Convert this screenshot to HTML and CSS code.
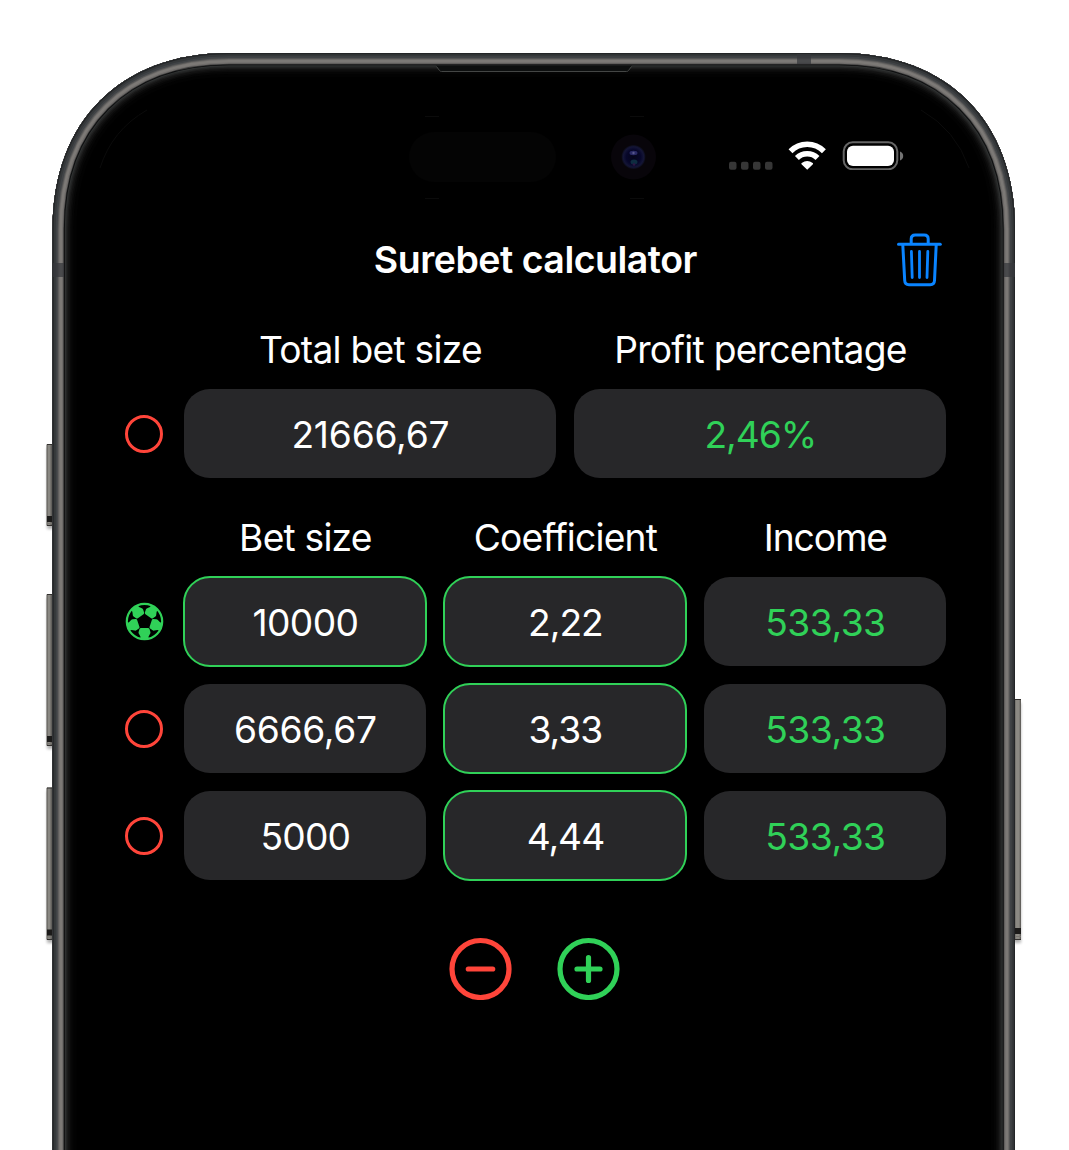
FILE: index.html
```html
<!DOCTYPE html>
<html lang="en">
<head>
<meta charset="utf-8">
<title>Surebet calculator</title>
<link rel="stylesheet" href="styles.css">
</head>
<body>
<svg class="phone" width="1069" height="1150" viewBox="0 0 1069 1150" aria-hidden="true">
  <defs>
    <path id="body" d="M52.500 1300V229C52.500 121 121 53 229 53H839C947 53 1015 121 1015 229V1300Z"/>
    <clipPath id="inside"><use href="#body"/></clipPath>
    <linearGradient id="keyL" x1="0" x2="1" y1="0" y2="0"><stop offset="0" stop-color="#55534f"/><stop offset=".3" stop-color="#95938d"/><stop offset=".55" stop-color="#6d6b67"/><stop offset="1" stop-color="#2b2a28"/></linearGradient>
    <linearGradient id="keyR" x1="1" x2="0" y1="0" y2="0"><stop offset="0" stop-color="#55534f"/><stop offset=".25" stop-color="#8b8983"/><stop offset=".6" stop-color="#8b8983"/><stop offset="1" stop-color="#33312f"/></linearGradient>
    <filter id="soft" x="-100%" width="300%" y="-10%" height="120%"><feGaussianBlur stdDeviation="1.8"/></filter>
    <radialGradient id="lens"><stop offset="0" stop-color="#050519"/><stop offset=".6" stop-color="#07072a"/><stop offset=".85" stop-color="#141536"/><stop offset="1" stop-color="#0b0b16"/></radialGradient>
  </defs>
  <g filter="url(#soft)" fill="#000" opacity=".3">
    <rect x="47" y="448" width="8" height="81"/><rect x="47" y="598" width="8" height="151"/><rect x="47" y="791" width="8" height="152"/><rect x="1013" y="703" width="8" height="240"/>
  </g>
  <g fill="url(#keyL)">
    <rect x="46.500" y="444" width="8" height="82" rx="1"/><rect x="46.500" y="594" width="8" height="152" rx="1"/><rect x="46.500" y="787.500" width="8" height="152.500" rx="1"/>
  </g>
  <rect x="1013" y="699" width="8" height="241" rx="1" fill="url(#keyR)"/>
  <path d="M47 519h6M47 739h6M47 932.500h6M1015 931h6" stroke="#1b1a19" stroke-width="6"/>
  <path d="M47 523.500h6M47 743.500h6M47 937h6M1015 936.500h6" stroke="#77746f" stroke-width="1.200"/>
  <path d="M47 525.500h6M47 745.500h6M47 939.500h6M1015 939.500h6M47 444.500h6M47 594.500h6M47 788h6M1015 699.500h6" stroke="#33312f"/>
  <use href="#body" fill="#000"/>
  <g clip-path="url(#inside)" fill="none">
    <use href="#body" stroke="#020202" stroke-width="48"/>
    <use href="#body" stroke="#050505" stroke-width="42"/>
    <use href="#body" stroke="#0a0a0a" stroke-width="38"/>
    <use href="#body" stroke="#111" stroke-width="35"/>
    <use href="#body" stroke="#191919" stroke-width="32"/>
    <use href="#body" stroke="#232424" stroke-width="29.500"/>
    <use href="#body" stroke="#2d2f2f" stroke-width="27"/>
    <use href="#body" stroke="#0c0d0e" stroke-width="24.500"/>
    <use href="#body" stroke="#3b3b3b" stroke-width="22.800"/>
    <use href="#body" stroke="#6f6c6a" stroke-width="21.500"/>
    <use href="#body" stroke="#7c7976" stroke-width="19"/>
    <use href="#body" stroke="#6c6a68" stroke-width="14"/>
    <use href="#body" stroke="#545454" stroke-width="12"/>
    <use href="#body" stroke="#404346" stroke-width="10"/>
    <use href="#body" stroke="#35383a" stroke-width="6.500"/>
    <use href="#body" stroke="#232527" stroke-width="2.400"/>
  </g>
  <path d="M53 263h11v14H53zM1004 263h11v14h-11zM797 54h14v10h-14z" fill="#36383b" opacity=".72"/>
  <path d="M436 65.500h196l-3.500 5q-.6 1.300-2 1.300H442q-1.400 0-2-1.300z" fill="#0d0f0f"/>
  <path d="M436.500 66.500l3 4q.7 1 2 1h185q1.300 0 2-1l3-4" fill="none" stroke="#444645"/>
  <rect x="409" y="132" width="147" height="50" rx="25" fill="#040404"/>
  <circle cx="633.500" cy="157" r="22.500" fill="#08050a"/>
  <circle cx="633.500" cy="157" r="12" fill="url(#lens)"/>
  <ellipse cx="633.500" cy="153" rx="4" ry="2.200" fill="#2a2a66"/>
  <circle cx="633.500" cy="153" r="1.200" fill="#58588c"/>
  <ellipse cx="634" cy="162" rx="3.500" ry="2.500" fill="#0e2c40"/>
  <circle cx="634" cy="164.500" r="1.300" fill="#2e1542"/>
  <path d="M100 168Q112 130 147 110M921 110Q956 130 969 168" fill="none" stroke="#0b0b0b"/>
  <path d="M425 116.500h14M630 116.500h14M425 198.500h14M630 198.500h14" stroke="#0b0b0b"/>
</svg>

<main class="screen">
  <div class="status">
    <svg width="175" height="30" viewBox="0 0 175 30" role="img" aria-label="Status">
      <g fill="#363636"><rect x="0" y="21.800" width="7.500" height="8" rx="2"/><rect x="12" y="21.800" width="7.500" height="8" rx="2"/><rect x="24" y="21.800" width="7.500" height="8" rx="2"/><rect x="36" y="21.800" width="7.500" height="8" rx="2"/></g>
      <g fill="none" stroke="#fff" stroke-width="5.500">
        <path d="M61.500 11.300A23.500 23.500 0 0 1 94.900 11.300"/>
        <path d="M67.900 18A14.500 14.500 0 0 1 88.500 18"/>
      </g>
      <path d="M78.200 29.800L72.500 24.200Q72 23.500 72.700 23Q78.200 18.800 83.700 23Q84.400 23.500 83.900 24.200Z" fill="#fff"/>
      <rect x="114.700" y="2.300" width="53.600" height="27" rx="9" fill="none" stroke="#666" stroke-width="2"/>
      <rect x="118" y="5.700" width="47" height="20.300" rx="6" fill="#fff"/>
      <path d="M171 11.500q3.200 1.300 3.200 4.500t-3.200 4.500z" fill="#737373"/>
    </svg>
  </div>

  <header class="bar">
    <h1 class="title">Surebet calculator</h1>
    <button class="icon-button" aria-label="Clear">
      <svg width="46" height="54" viewBox="0 0 46 54" fill="none" stroke="#0a84ff" stroke-width="3" stroke-linecap="round" stroke-linejoin="round">
        <path d="M1.500 11.200H43.300"/>
        <path d="M14.200 10V6Q14.200 2 18.200 2H27.200Q31.200 2 31.200 6V10"/>
        <path d="M5.800 12L7.700 47.500Q7.900 51.700 12 51.700H33.200Q37.300 51.700 37.500 47.500L39.200 12"/>
        <path stroke-width="2.800" d="M14.400 18.500L15.200 44.500M22.500 18.500V44.500M30.800 18.500L30 44.500"/>
      </svg>
    </button>
  </header>

  <section class="grid totals">
    <span></span>
    <span class="label l-total">Total bet size</span>
    <span class="label l-profit">Profit percentage</span>
    <i class="ring"></i>
    <span class="field v-total">21666,67</span>
    <span class="field green v-percent">2,46%</span>
  </section>

  <section class="grid bets">
    <span></span>
    <span class="label l-bet">Bet size</span>
    <span class="label l-coef">Coefficient</span>
    <span class="label l-income">Income</span>

    <svg class="ball" width="39" height="39" viewBox="0 0 39 39">
      <defs><clipPath id="ballClip"><circle cx="19.500" cy="19.500" r="18"/></clipPath>
      <path id="patch" d="M16 26h7q1 0 1.500 1l.9 3q.3 1-.3 1.700L23.600 34.500V38H15.400V34.500L13.900 31.700q-.6-.7-.3-1.700l.9-3q.5-1 1.500-1z"/></defs>
      <circle cx="19.500" cy="19.500" r="17.700" fill="none" stroke="#30d158" stroke-width="2.200"/>
      <g fill="#30d158" clip-path="url(#ballClip)">
        <use href="#patch"/><use href="#patch" transform="rotate(72 19.500 19.500)"/><use href="#patch" transform="rotate(144 19.500 19.500)"/><use href="#patch" transform="rotate(216 19.500 19.500)"/><use href="#patch" transform="rotate(288 19.500 19.500)"/>
      </g>
    </svg>
    <span class="field active v-10000">10000</span>
    <span class="field active v-coef">2,22</span>
    <span class="field green v-income">533,33</span>

    <i class="ring"></i>
    <span class="field v-6666">6666,67</span>
    <span class="field active v-coef">3,33</span>
    <span class="field green v-income">533,33</span>

    <i class="ring"></i>
    <span class="field v-5000">5000</span>
    <span class="field active v-coef">4,44</span>
    <span class="field green v-income">533,33</span>
  </section>

  <footer class="actions">
    <button class="icon-button" aria-label="Remove"><svg width="63" height="63" viewBox="0 0 63 63" fill="none" stroke="#ff453a" stroke-width="5.200" stroke-linecap="round"><circle cx="31.500" cy="32" r="28.500"/><path d="M19.300 32H43.700"/></svg></button>
    <button class="icon-button" aria-label="Add"><svg width="63" height="63" viewBox="0 0 63 63" fill="none" stroke="#30d158" stroke-width="5.200" stroke-linecap="round"><circle cx="31.500" cy="32" r="28.500"/><path d="M20 32H43M31.500 20.500V43.500"/></svg></button>
  </footer>
</main>
</body>
</html>
```
FILE: styles.css
```css
* { box-sizing: border-box; }

body {
  margin: 0;
  width: 1069px;
  height: 1150px;
  overflow: hidden;
  position: relative;
  background: #fff;
  color: #fff;
  font-family: Inter, "Liberation Sans", sans-serif;
  font-size: 37.2px;
}

.phone { position: absolute; inset: 0; }

.screen {
  position: relative;
  width: 1069px;
  padding: 140px 122.600px 0 125.400px;
}

.status {
  display: flex;
  justify-content: flex-end;
  height: 30px;
  padding-right: 42.400px;
}

.bar {
  display: grid;
  grid-template-columns: 46px 1fr 46px;
  align-items: center;
  height: 54px;
  margin: 62px 3px 0 2px;
}

.title {
  grid-column: 2;
  margin: 0;
  text-align: center;
  font-size: 37.500px;
  font-weight: 600;
  letter-spacing: -.5px;
  line-height: 55px;
  white-space: nowrap;
}

.icon-button {
  display: block;
  padding: 0;
  border: 0;
  background: none;
}

.icon-button svg { display: block; }

.grid {
  display: grid;
  justify-items: stretch;
  align-items: center;
  column-gap: 18px;
  row-gap: 18px;
}

.totals {
  grid-template-columns: 41px 1fr 1fr;
  grid-template-rows: 46px 89px;
  row-gap: 16px;
  margin-top: 41.400px;
}

.bets {
  grid-template-columns: 41px repeat(3, 1fr);
  grid-template-rows: 46px repeat(3, 89px);
  margin-top: 35px;
}

.label, .field {
  text-align: center;
  white-space: nowrap;
}

.label { line-height: 46px; }

.bets .label { padding-top: 3px; }

.l-total { letter-spacing: -.75px; }
.l-profit { letter-spacing: -.75px; }
.l-bet { letter-spacing: -.8px; }
.l-coef { letter-spacing: -.8px; font-variant-ligatures: none; }
.l-income { letter-spacing: -1.100px; }

.field {
  height: 89px;
  line-height: 91px;
  border-radius: 26px;
  background: #272729;
}

.v-total { letter-spacing: -.2px; }
.v-percent { letter-spacing: -1px; }
.v-10000 { letter-spacing: -.6px; }
.v-coef { letter-spacing: -1px; }
.v-income { letter-spacing: -.5px; }
.v-6666 { letter-spacing: -.3px; }
.v-5000 { letter-spacing: -.8px; }

.active {
  outline: 2px solid #30d158;
  outline-offset: -1px;
}

.green { color: #30d158; }

.ring {
  width: 38px;
  height: 38px;
  border: 3px solid #ff453a;
  border-radius: 50%;
}

.ball { display: block; }

.actions {
  display: flex;
  justify-content: center;
  gap: 45.500px;
  margin: 57px 2.500px 0 0;
}
```
